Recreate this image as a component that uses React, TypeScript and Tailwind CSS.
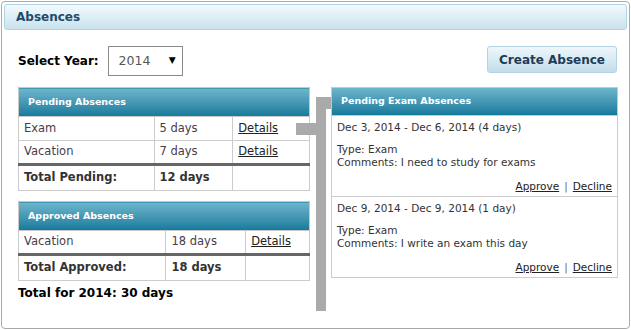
import React from 'react';

const font = { fontFamily: '"DejaVu Sans", Verdana, sans-serif' };

type Row = { label: string; days: string };

function AbsenceTable({ title, rows, totalLabel, total, cols }: { title: string; rows: Row[]; totalLabel: string; total: string; cols: [string, string, string] }) {
  return (
    <table className="w-[292px] border-collapse text-[11.5px] text-[#483c48]">
      <colgroup>
        <col className={cols[0]} />
        <col className={cols[1]} />
        <col className={cols[2]} />
      </colgroup>
      <thead>
        <tr>
          <th colSpan={3} className="h-[29px] border border-[#c8c8c8] bg-gradient-to-b from-[#6db6cc] to-[#117a9c] pl-[9px] text-left text-[9.5px] font-bold text-white">
            {title}
          </th>
        </tr>
      </thead>
      <tbody>
        {rows.map((r, i) => (
          <tr key={r.label} className={i === rows.length - 1 ? 'h-[24px] border-b-[3px] border-b-[#666]' : 'h-[24px]'}>
            <td className="border-x border-t border-[#ccc] pl-[5px]">{r.label}</td>
            <td className="border-x border-t border-[#ccc] pl-[5px]">{r.days}</td>
            <td className="border-x border-t border-[#ccc] pl-[5px]">
              <a className="text-[#222] underline">Details</a>
            </td>
          </tr>
        ))}
        <tr className="h-[26px] font-bold text-[#333]">
          <td className="border border-[#ccc] pl-[5px]">{totalLabel}</td>
          <td className="border border-[#ccc] pl-[5px]">{total}</td>
          <td className="border border-[#ccc]"></td>
        </tr>
      </tbody>
    </table>
  );
}

function ExamItem({ dates, type, comments }: { dates: string; type: string; comments: string }) {
  return (
    <div className="border-x border-b border-[#ccc] px-[5px] pt-[4px] pb-[4px] text-[10.5px] text-[#333]">
      <div className="leading-[14px]">{dates}</div>
      <div className="mt-[9px] leading-[13px]">Type: {type}</div>
      <div className="leading-[13px]">Comments: {comments}</div>
      <div className="mt-[11px] text-right leading-[12px]">
        <a className="text-[#222] underline">Approve</a>
        <span className="mx-[5px] text-[#666]">|</span>
        <a className="text-[#222] underline">Decline</a>
      </div>
    </div>
  );
}

export default function App() {
  return (
    <div className="h-[330px] w-[631px] bg-white" style={font}>
      <div className="relative m-[1px] h-[328px] w-[629px] rounded-[4px] border border-[#aaa] p-[2px]">
        {/* panel title */}
        <div className="flex h-[26px] items-center rounded-[3px] border border-[#b3d4e3] bg-gradient-to-b from-[#f2fafd] to-[#c9e2ee] pl-[11px] text-[12px] font-bold text-[#1f4a68]">
          Absences
        </div>

        {/* toolbar */}
        <div className="mt-[16px] flex items-center justify-between pl-[14px] pr-[10px]">
          <div className="flex items-center">
            <span className="text-[12px] font-bold text-black">Select Year:</span>
            <div className="ml-[9px] flex h-[30px] w-[75px] items-center justify-between border border-[#888] pl-[10px] pr-[6px] text-[12.5px] text-[#555]">
              <span>2014</span>
              <span className="text-[9px] text-black">▼</span>
            </div>
          </div>
          <button className="mb-[3px] h-[27px] w-[130px] rounded-[3px] border border-[#b6d3e2] bg-gradient-to-b from-[#eef7fc] to-[#c3ddeb] text-[12px] font-bold text-[#1d3c58]">
            Create Absence
          </button>
        </div>

        {/* content */}
        <div className="mt-[11px] flex pl-[14px]">
          <div className="flex flex-col">
            <AbsenceTable
              title="Pending Absences"
              rows={[{ label: 'Exam', days: '5 days' }, { label: 'Vacation', days: '7 days' }]}
              totalLabel="Total Pending:"
              total="12 days"
              cols={['w-[136px]', 'w-[79px]', 'w-[77px]']}
            />
            <div className="mt-[10px]">
              <AbsenceTable
                title="Approved Absences"
                rows={[{ label: 'Vacation', days: '18 days' }]}
                totalLabel="Total Approved:"
                total="18 days"
                cols={['w-[148px]', 'w-[80px]', 'w-[64px]']}
              />
            </div>
            <div className="mt-[3px] text-[12px] font-bold text-black">Total for 2014: 30 days</div>
          </div>

          <div className="ml-[21px] w-[287px]">
            <div className="flex h-[29px] items-center border border-[#c8c8c8] bg-gradient-to-b from-[#6db6cc] to-[#117a9c] pl-[9px] text-[9.5px] font-bold text-white">
              Pending Exam Absences
            </div>
            <ExamItem dates="Dec 3, 2014 - Dec 6, 2014 (4 days)" type="Exam" comments="I need to study for exams" />
            <ExamItem dates="Dec 9, 2014 - Dec 9, 2014 (1 day)" type="Exam" comments="I write an exam this day" />
          </div>
        </div>

        {/* connector between pending list and details */}
        <div className="absolute left-[314px] top-[95px] h-[214px] w-[10px] bg-[#aaa]" />
        <div className="absolute left-[314px] top-[95px] h-[12px] w-[15px] bg-[#aaa]" />
        <div className="absolute left-[294px] top-[121px] h-[12px] w-[20px] bg-[#aaa]" />
      </div>
    </div>
  );
}
